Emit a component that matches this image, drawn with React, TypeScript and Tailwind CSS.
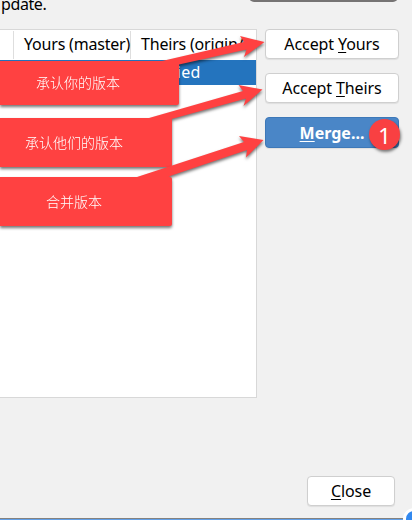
import clsx from "clsx";
import type { ReactNode } from "react";

const callouts = [
  {
    text: "承认你的版本",
    box: "top-[61px] h-[44px] w-[179px] pl-[36px]",
    arrow: "M158 62 L162 61 L244 42 L240 36 L264.5 42 L244 57 L246.5 49.5 L179 64.5 L170 70 Z",
  },
  {
    text: "承认他们的版本",
    box: "top-[118px] h-[49px] w-[172px] pl-[25px]",
    arrow: "M146 119 L149 118 L243 91 L238.5 85 L262.5 89.5 L243.5 106 L246 98.5 L171.5 119 L160 124 Z",
  },
  {
    text: "合并版本",
    box: "top-[177px] h-[49px] w-[172px] pl-[46px]",
    arrow: "M134 178 L137 177 L244 142 L239 136 L263.5 140 L246 157.5 L247 150 L171.5 175.5 L160 182 Z",
  },
];

function Button({
  children,
  className,
  primary = false,
}: {
  children: ReactNode;
  className?: string;
  primary?: boolean;
}) {
  return (
    <button
      className={clsx(
        "flex shrink-0 items-center justify-center rounded-[4px] border shadow-[0_1px_1px_rgba(0,0,0,0.08)]",
        primary ? "border-[#3d78b8] bg-[#4a86c7] font-bold text-white" : "border-[#cfcfcf] bg-white tracking-[-0.1px]",
        className
      )}
    >
      {children}
    </button>
  );
}

function Key({ children }: { children: string }) {
  return <span className="underline decoration-1 underline-offset-[2px]">{children}</span>;
}

function ConflictTable() {
  return (
    <div className="h-[369px] w-[257px] shrink-0 border-t border-r border-b border-[#d8d8d8] bg-white tracking-[-0.2px]">
      <div className="flex h-[30px] items-center whitespace-nowrap">
        <div className="h-[28px] w-[14px] border-r border-[#dedede]" />
        <div className="flex h-[28px] w-[117px] items-center border-r border-[#dedede] pb-[2px] pl-[10px]">
          Yours (master)
        </div>
        <div className="flex h-[28px] items-center pb-[2px] pl-[10px]">Theirs (origin/</div>
      </div>
      <div className="flex h-[25px] items-center bg-[#2474be] pb-[2px] pl-[131px] tracking-[0.4px] text-white">
        Modified
      </div>
    </div>
  );
}

export default function App() {
  return (
    <div className="relative h-[520px] w-[412px] overflow-hidden bg-[#f1f1f1] font-['Noto_Sans','Noto_Sans_CJK_SC',sans-serif] text-[16px] leading-none text-black">
      <div className="flex h-[518px] flex-col">
        <div className="h-[29px] shrink-0">
          <p className="-mt-[4px] ml-px tracking-[-0.4px]">pdate.</p>
        </div>
        <div className="flex shrink-0">
          <ConflictTable />
          <div className="flex flex-col gap-[14px] pl-[8px]">
            <Button className="h-[30px] w-[134px]">
              <span>Accept <Key>Y</Key>ours</span>
            </Button>
            <Button className="h-[30px] w-[134px]">
              <span>Accept <Key>T</Key>heirs</span>
            </Button>
            <Button primary className="h-[31px] w-[134px]">
              <span><Key>M</Key>erge...</span>
            </Button>
          </div>
        </div>
        <div className="flex grow items-end justify-end pr-[17px] pb-[12px]">
          <Button className="h-[30px] w-[88px] pb-px">
            <span><Key>C</Key>lose</span>
          </Button>
        </div>
      </div>
      <div className="h-[2px] border-t border-[#85827f] bg-[#62a0e8]" />

      {/* neighbouring window edges */}
      <div className="absolute -top-[8px] left-[249px] h-[10px] w-[149px] rounded-[8px] bg-[#767474]" />
      <div className="absolute top-[508px] left-[403px] size-[22px] rounded-full border-[3px] border-white bg-[#3389ef]" />

      {/* each callout and its arrow share one shadow */}
      {callouts.map((c) => (
        <div key={c.text} className="absolute inset-0 drop-shadow-[0.5px_2px_1.5px_rgba(0,0,0,0.55)]">
          <svg className="absolute inset-0" width="412" height="520" viewBox="0 0 412 520" fill="#ff4141">
            <path d={c.arrow} />
          </svg>
          <div
            className={clsx(
              "absolute left-0 flex items-center rounded-r-[2px] bg-[#ff4141] text-[14px] font-light text-white",
              c.box
            )}
          >
            {c.text}
          </div>
        </div>
      ))}
      <div className="absolute top-[119px] left-[369px] flex size-[31px] items-center justify-center rounded-full bg-[#f94042] text-[22px] text-white shadow-[1px_2px_3px_rgba(0,0,0,0.5)]">
        1
      </div>
    </div>
  );
}
